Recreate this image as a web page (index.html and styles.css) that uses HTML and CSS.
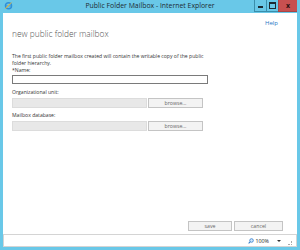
FILE: index.html
```html
<!DOCTYPE html>
<html lang="en">
<head>
    <meta charset="UTF-8">
    <title>Public Folder Mailbox - Internet Explorer</title>
    <link rel="stylesheet" href="styles.css">
</head>
<body>
    <div class="window">
        <div class="titlebar">
            <svg class="ie-logo" width="9" height="9" viewBox="0 0 10 10">
                <circle cx="5" cy="5.3" r="3.4" fill="none" stroke="#2f8fd8" stroke-width="1.6"/>
                <rect x="2" y="5" width="6" height="0.9" fill="#2f8fd8"/>
                <path d="M1 8.5 C 3 6, 7 2, 9.3 0.8 C 8 2.8, 5 6, 1.5 8.8 Z" fill="#f2b531"/>
            </svg>
            <span class="title">Public Folder Mailbox - Internet Explorer</span>
            <div class="controls">
                <span class="ctl"><i class="min"></i></span>
                <span class="ctl"><i class="max"></i></span>
                <span class="ctl close">x</span>
            </div>
        </div>

        <div class="content">
            <div class="help-row"><a href="#" class="help">Help</a></div>
            <h1>new public folder mailbox</h1>

            <form class="form">
                <p class="note">The first public folder mailbox created will contain the writable copy of the public<br>folder hierarchy.</p>
                <label for="mbxName">*Name:</label>
                <input type="text" id="mbxName" class="name-input">

                <label class="gap">Organizational unit:</label>
                <div class="pick-row">
                    <input type="text" class="pick" disabled>
                    <button type="button" class="btn browse">browse...</button>
                </div>

                <label>Mailbox database:</label>
                <div class="pick-row">
                    <input type="text" class="pick" disabled>
                    <button type="button" class="btn browse">browse...</button>
                </div>
            </form>

            <div class="actions">
                <button type="button" class="btn save">save</button>
                <button type="button" class="btn cancel">cancel</button>
            </div>
        </div>

        <div class="statusbar">
            <svg width="6" height="6" viewBox="0 0 8 8">
                <circle cx="4.7" cy="3.3" r="2.4" fill="#cfe6fb" stroke="#2a77c9" stroke-width="1"/>
                <path d="M3 5 L0.8 7.2" stroke="#2a77c9" stroke-width="1.4"/>
            </svg>
            <span class="zoom">100%</span>
            <span class="arrow"></span>
            <span class="grip"></span>
        </div>
    </div>
</body>
</html>
```

FILE: styles.css
```css
html, body {
    margin: 0;
    padding: 0;
}
body {
    width: 300px;
    height: 250px;
    overflow: hidden;
    font-family: "Open Sans", "Noto Sans", sans-serif;
    background-color: #69c8e8;
}
.window {
    display: flex;
    flex-direction: column;
    height: 250px;
    padding: 0 3px 3px 3px;
    box-sizing: border-box;
    background-color: #69c8e8;
}
.titlebar {
    height: 13px;
    display: flex;
    align-items: center;
    position: relative;
}
.ie-logo {
    margin-left: 1px;
    margin-top: -2px;
}
.title {
    position: absolute;
    left: 0;
    right: 0;
    top: 0;
    text-align: center;
    font-size: 6.9px;
    line-height: 12px;
    color: #1d2a33;
}
.controls {
    margin-left: auto;
    display: flex;
    align-self: flex-start;
    height: 12px;
}
.ctl {
    width: 12px;
    height: 12px;
    border: 1px solid #3a8eab;
    border-top: none;
    border-right: none;
    box-sizing: border-box;
    display: flex;
    align-items: center;
    justify-content: center;
}
.ctl .min {
    display: block;
    width: 5px;
    height: 2px;
    margin-top: 3px;
    background-color: #1d2a33;
}
.ctl .max {
    display: block;
    width: 5px;
    height: 4px;
    border: 1px solid #1d2a33;
    border-top-width: 2px;
}
.ctl.close {
    width: 19px;
    background-color: #c75050;
    color: #2a1010;
    font-size: 7px;
    font-weight: bold;
    line-height: 10px;
    border-color: #a84545;
}
.content {
    flex: 1;
    background-color: #fff;
    padding: 0 9px 0 9px;
    display: flex;
    flex-direction: column;
}
.help-row {
    text-align: right;
    margin-top: 6px;
    height: 8px;
    line-height: 8px;
    font-size: 6px;
    padding-right: 10px;
}
.help {
    font-size: 6px;
    color: #1f77c4;
    text-decoration: none;
}
h1 {
    font-weight: 300;
    font-size: 8.4px;
    color: #555;
    margin: 1px 0 0 0;
    line-height: 12px;
}
.form {
    margin-top: 13px;
    display: flex;
    flex-direction: column;
}
.note {
    font-size: 5.1px;
    line-height: 7px;
    color: #333;
    margin: 0;
    white-space: nowrap;
}
label {
    font-size: 5.1px;
    line-height: 7px;
    color: #333;
}
label.gap {
    margin-top: 5px;
}
.name-input {
    width: 196px;
    height: 9px;
    box-sizing: border-box;
    border: 1px solid #7a7a7a;
    margin: 1px 0 0 0;
    padding: 0;
}
.pick-row {
    display: flex;
    gap: 1px;
    margin: 2px 0 4px 0;
}
.pick {
    width: 135px;
    height: 10px;
    box-sizing: border-box;
    border: 1px solid #dcdcdc;
    background-color: #e8e8e8;
    margin: 0;
    padding: 0;
}
.btn {
    font-family: "Open Sans", "Noto Sans", sans-serif;
    font-size: 5.2px;
    color: #666;
    background-color: #f3f3f3;
    border: 1px solid #c4c4c4;
    padding: 0;
    height: 10px;
    line-height: 8px;
}
.browse {
    width: 55px;
}
.actions {
    margin-top: auto;
    margin-bottom: 3px;
    display: flex;
    justify-content: flex-end;
    gap: 2px;
    padding-right: 5px;
}
.save {
    width: 44px;
}
.cancel {
    width: 49px;
}
.statusbar {
    height: 13px;
    box-sizing: border-box;
    border: 1px solid #d4d4d4;
    background-color: #fff;
    display: flex;
    align-items: center;
    justify-content: flex-end;
    padding-right: 4px;
    gap: 2px;
}
.zoom {
    font-size: 5.3px;
    color: #222;
}
.arrow {
    width: 0;
    height: 0;
    border-left: 2px solid transparent;
    border-right: 2px solid transparent;
    border-top: 2px solid #333;
    margin: 0 5px 0 6px;
}
.grip {
    width: 3px;
    height: 3px;
    align-self: flex-end;
    margin-bottom: 1px;
    border-right: 1px dotted #aaa;
    border-bottom: 1px dotted #aaa;
}
```
